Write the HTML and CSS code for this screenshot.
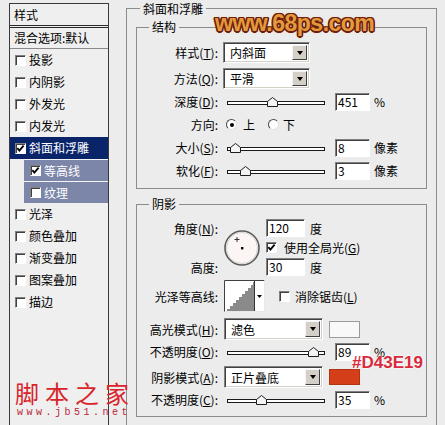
FILE: index.html
```html
<!DOCTYPE html>
<html lang="zh-CN">
<head>
<meta charset="utf-8">
<title>图层样式 - 斜面和浮雕</title>
<link rel="stylesheet" href="styles.css">
</head>
<body>
<div class="dialog">
  <div class="sidebar">
    <div class="side-head">样式</div>
    <div class="side-blend">混合选项:默认</div>
    <div class="side-item"><span class="cb"></span>投影</div>
    <div class="side-item"><span class="cb"></span>内阴影</div>
    <div class="side-item"><span class="cb"></span>外发光</div>
    <div class="side-item"><span class="cb"></span>内发光</div>
    <div class="side-item selected"><span class="cb"><svg viewBox="0 0 9 9" width="9" height="9"><path d="M1.3 4.2 L3.4 6.6 L7.6 1.6" fill="none" stroke="#000" stroke-width="1.8"/></svg></span>斜面和浮雕</div>
    <div class="side-item sub"><span class="cb"><svg viewBox="0 0 9 9" width="9" height="9"><path d="M1.3 4.2 L3.4 6.6 L7.6 1.6" fill="none" stroke="#000" stroke-width="1.8"/></svg></span>等高线</div>
    <div class="side-item sub"><span class="cb"></span>纹理</div>
    <div class="side-item"><span class="cb"></span>光泽</div>
    <div class="side-item"><span class="cb"></span>颜色叠加</div>
    <div class="side-item"><span class="cb"></span>渐变叠加</div>
    <div class="side-item"><span class="cb"></span>图案叠加</div>
    <div class="side-item"><span class="cb"></span>描边</div>
  </div>

  <div class="main">
    <fieldset class="group outer">
      <legend>斜面和浮雕</legend>

      <fieldset class="group inner structure">
        <legend>结构</legend>
        <div class="row row-sel">
          <span class="lbl">样式(<u>T</u>):</span>
          <div class="select s-struct"><span class="select-text">内斜面</span><span class="select-btn"><span class="arrow"></span></span></div>
        </div>
        <div class="row row-sel">
          <span class="lbl">方法(<u>Q</u>):</span>
          <div class="select s-struct"><span class="select-text">平滑</span><span class="select-btn"><span class="arrow"></span></span></div>
        </div>
        <div class="row row-sl first-sl">
          <span class="lbl">深度(<u>D</u>):</span>
          <div class="slider"><svg class="thumb" style="left:46%" viewBox="0 0 11 10" width="11" height="10"><polygon points="0.5,9.5 0.5,4.5 5.5,0.5 10.5,4.5 10.5,9.5" fill="#f4f4f4" stroke="#1e1e1e"/></svg></div>
          <span class="num">451</span><span class="unit">%</span>
        </div>
        <div class="row row-sl">
          <span class="lbl">方向:</span>
          <span class="radio r-up"><span class="dot"></span></span><span class="r-text">上</span>
          <span class="radio r-down"></span><span class="r-text r-text2">下</span>
        </div>
        <div class="row row-sl">
          <span class="lbl">大小(<u>S</u>):</span>
          <div class="slider"><svg class="thumb" style="left:8%" viewBox="0 0 11 10" width="11" height="10"><polygon points="0.5,9.5 0.5,4.5 5.5,0.5 10.5,4.5 10.5,9.5" fill="#f4f4f4" stroke="#1e1e1e"/></svg></div>
          <span class="num">8</span><span class="unit">像素</span>
        </div>
        <div class="row row-sl">
          <span class="lbl">软化(<u>F</u>):</span>
          <div class="slider"><svg class="thumb" style="left:18%" viewBox="0 0 11 10" width="11" height="10"><polygon points="0.5,9.5 0.5,4.5 5.5,0.5 10.5,4.5 10.5,9.5" fill="#f4f4f4" stroke="#1e1e1e"/></svg></div>
          <span class="num">3</span><span class="unit">像素</span>
        </div>
      </fieldset>

      <fieldset class="group inner shadow">
        <legend>阴影</legend>
        <div class="angle">
          <span class="lbl a-l1">角度(<u>N</u>):</span>
          <svg class="dial" viewBox="0 0 38 38" width="38" height="38">
            <circle cx="19" cy="19" r="17" fill="#fbf6f3" stroke="#5c5c5c" stroke-width="1.6"/>
            <circle cx="19" cy="19" r="15.6" fill="none" stroke="#c9c9c9" stroke-width="0.8"/>
            <rect x="18" y="18" width="2.4" height="2.4" fill="#000"/>
            <path d="M14 8 V13 M11.5 10.5 H16.5" stroke="#333" stroke-width="1"/>
          </svg>
          <span class="a-c1"><span class="num n-angle">120</span><span class="unit u-deg">度</span></span>
          <span class="a-c2"><span class="cb"><svg viewBox="0 0 9 9" width="9" height="9"><path d="M1.3 4.2 L3.4 6.6 L7.6 1.6" fill="none" stroke="#000" stroke-width="1.8"/></svg></span><span class="cb-text">使用全局光(<u>G</u>)</span></span>
          <span class="lbl a-l3">高度:</span>
          <span class="a-c3"><span class="num n-angle">30</span><span class="unit u-deg">度</span></span>
        </div>

        <div class="row row-contour">
          <span class="lbl">光泽等高线:</span>
          <svg class="contour" viewBox="0 0 41 32" width="41" height="32">
            <rect x="0" y="0" width="41" height="32" fill="#fff"/>
            <polygon points="3,31 3,29 6,29 6,26 9,26 9,23 12,23 12,20 15,20 15,17 18,17 18,14 21,14 21,11 24,11 24,8 27,8 27,5 29,5 29,2 30,2 30,31" fill="#8a8a8a"/>
            <path d="M30.5 1 V31" stroke="#333" stroke-width="1"/>
            <polygon points="33,15 38,15 35.5,18" fill="#000"/>
            <path d="M0.5 32 V0.5 H40.5" fill="none" stroke="#404040" stroke-width="1"/>
            <path d="M40.5 0.5 V31.5 H0.5" fill="none" stroke="#e8e8e8" stroke-width="1"/>
          </svg>
          <span class="cb cb-aa"></span><span class="cb-text">消除锯齿(<u>L</u>)</span>
        </div>

        <div class="row row-mode first-mode">
          <span class="lbl">高光模式(<u>H</u>):</span>
          <div class="select s-mode"><span class="select-text">滤色</span><span class="select-btn"><span class="arrow"></span></span></div>
          <span class="swatch sw-white"></span>
        </div>
        <div class="row row-sl">
          <span class="lbl">不透明度(<u>O</u>):</span>
          <div class="slider"><svg class="thumb" style="left:89%" viewBox="0 0 11 10" width="11" height="10"><polygon points="0.5,9.5 0.5,4.5 5.5,0.5 10.5,4.5 10.5,9.5" fill="#f4f4f4" stroke="#1e1e1e"/></svg></div>
          <span class="num">89</span><span class="unit">%</span>
        </div>
        <div class="row row-mode second-mode">
          <span class="lbl">阴影模式(<u>A</u>):</span>
          <div class="select s-mode"><span class="select-text">正片叠底</span><span class="select-btn"><span class="arrow"></span></span></div>
          <span class="swatch sw-red"></span>
        </div>
        <div class="row row-sl">
          <span class="lbl">不透明度(<u>C</u>):</span>
          <div class="slider"><svg class="thumb" style="left:35%" viewBox="0 0 11 10" width="11" height="10"><polygon points="0.5,9.5 0.5,4.5 5.5,0.5 10.5,4.5 10.5,9.5" fill="#f4f4f4" stroke="#1e1e1e"/></svg></div>
          <span class="num">35</span><span class="unit">%</span>
        </div>
      </fieldset>
    </fieldset>
  </div>

  <div class="wm-68ps">www.68ps.com</div>
  <div class="hex-note">#D43E19</div>
  <div class="wm-jb51">
    <div class="wm-cn">脚本之家</div>
    <div class="wm-url">www.jb51.net</div>
  </div>
</div>
</body>
</html>
```

FILE: styles.css
```css
* { box-sizing: border-box; }

body {
  margin: 0;
  background: #ececec;
  font-family: "Noto Sans CJK SC", "Noto Sans", sans-serif;
  font-size: 12px;
  color: #000;
}

.dialog {
  position: relative;
  width: 445px;
  height: 425px;
  overflow: hidden;
  display: flex;
  align-items: flex-start;
  background: #ececec;
}

u { text-decoration: underline; text-underline-offset: 1px; }

/* ---------- sidebar ---------- */
.sidebar {
  margin: 3px 0 0 9px;
  width: 100px;
  height: 422px;
  border: 1px solid #3a3a3a;
  border-bottom: none;
  background: #efefef;
  display: flex;
  flex-direction: column;
  flex: none;
}

.side-head {
  height: 24px;
  padding-left: 4px;
  display: flex;
  align-items: center;
  border-bottom: 3px double #2a2a2a;
  line-height: 14px;
}

.side-blend {
  height: 21px;
  padding-left: 4px;
  display: flex;
  align-items: center;
  border-bottom: 1px solid #8a8a8a;
  line-height: 14px;
  white-space: nowrap;
}

.side-item {
  height: 22px;
  display: flex;
  align-items: center;
  padding-left: 5px;
  line-height: 14px;
  white-space: nowrap;
}

.side-item .cb { margin-right: 3px; }

.side-item.selected {
  background: #0a246a;
  color: #fff;
}

.side-item.sub {
  margin-left: 14px;
  padding-left: 6px;
  background: #7b86a8;
  color: #fff;
  border-top: 1px solid #f4f4f4;
}

/* ---------- generic controls ---------- */
.cb {
  width: 11px;
  height: 11px;
  flex: none;
  background: #fff;
  border: 1px solid;
  border-color: #808080 #fff #fff #808080;
  box-shadow: inset 1px 1px 0 #404040;
  display: flex;
  align-items: center;
  justify-content: center;
}
.cb svg { display: block; }

.num {
  flex: none;
  width: 35px;
  height: 18px;
  margin-left: 10px;
  background: #fff;
  border: 1px solid;
  border-color: #808080 #fff #fff #808080;
  box-shadow: inset 1px 1px 0 #404040;
  padding-left: 2px;
  line-height: 16px;
}

.unit { margin-left: 4px; }

.select {
  flex: none;
  display: flex;
  background: #fff;
  border: 1px solid;
  border-color: #808080 #fff #fff #808080;
  box-shadow: inset 1px 1px 0 #404040, inset -1px -1px 0 #d4d0c8;
}
.select-text {
  flex: 1;
  padding-left: 6px;
  display: flex;
  align-items: center;
}
.select-btn {
  width: 15px;
  margin: 2px 2px 2px 0;
  background: #d4d0c8;
  border: 1px solid;
  border-color: #f4f4f4 #404040 #404040 #f4f4f4;
  display: flex;
  align-items: center;
  justify-content: center;
}
.arrow {
  width: 0;
  height: 0;
  border-left: 3.5px solid transparent;
  border-right: 3.5px solid transparent;
  border-top: 4px solid #000;
}

.slider {
  flex: none;
  position: relative;
  width: 98px;
  height: 4px;
  margin: 3px 0 0 9px;
  border: 1px solid #1a1a1a;
  background: #fff;
}
.thumb {
  position: absolute;
  bottom: -3px;
  margin-left: -5.5px;
  display: block;
}

.radio {
  flex: none;
  width: 11px;
  height: 11px;
  border-radius: 50%;
  border: 1px solid;
  border-color: #4a4a4a #e2e2e2 #e2e2e2 #4a4a4a;
  background: #fff;
  display: flex;
  align-items: center;
  justify-content: center;
}
.dot { width: 4px; height: 4px; border-radius: 50%; background: #000; }
.r-up { margin-left: 8px; }
.r-text { margin-left: 6px; }
.r-down { margin-left: 13px; }
.r-text2 { margin-left: 4px; }

.swatch {
  flex: none;
  width: 31px;
  margin-left: 6px;
  border: 1px solid #9a9a9a;
}
.sw-white { height: 17px; background: #f8f8f8; }
.sw-red { height: 16px; background: #d43e19; border-color: #b03414; }

/* ---------- group boxes ---------- */
.main {
  margin-left: 17px;
  width: 311px;
  flex: none;
}

.group {
  margin: 0;
  min-width: 0;
  border: 1px solid #8c8c8c;
}
.group > legend {
  padding: 0 3px;
  height: 14px;
  line-height: 14px;
}

.outer { padding: 4px 9px 14px; }
.outer > legend { margin-left: 4px; height: 16px; line-height: 17px; }

.inner { width: 291px; padding-left: 0; padding-right: 0; }
.inner > legend { margin-left: 12px; }

.structure { padding-top: 8px; padding-bottom: 6px; }
.shadow { margin-top: 8px; padding-top: 8px; padding-bottom: 5px; }

.row {
  display: flex;
  align-items: center;
  white-space: nowrap;
}
.lbl {
  flex: none;
  width: 81px;
  text-align: right;
  white-space: nowrap;
}

.row-sel { height: 21px; }
.row-sel + .row-sel { margin-top: 5px; }
.s-struct { width: 87px; height: 21px; margin-left: 5px; }

.row-sl { height: 23px; }
.first-sl { margin-top: 1px; }

/* angle block */
.angle {
  display: grid;
  grid-template-columns: 81px 38px auto;
  grid-template-rows: 18px 21px 18px;
  column-gap: 5px;
  align-items: center;
}
.a-l1 { grid-column: 1; grid-row: 1; }
.a-l3 { grid-column: 1; grid-row: 3; }
.dial { grid-column: 2; grid-row: 1 / span 3; display: block; }
.a-c1, .a-c2, .a-c3 { grid-column: 3; display: flex; align-items: center; white-space: nowrap; }
.a-c1 { grid-row: 1; }
.a-c2 { grid-row: 2; }
.a-c3 { grid-row: 3; }
.n-angle { width: 39px; margin-left: 0; }
.u-deg { margin-left: 5px; }
.cb-text { margin-left: 7px; }

.row-contour { height: 32px; margin-top: 4px; }
.contour { flex: none; display: block; margin-left: 6px; }
.cb-aa { margin-left: 14px; }
.row-contour .cb-text { margin-left: 5px; }

.row-mode { height: 22px; }
.first-mode { margin-top: 6px; }
.second-mode { margin-top: 3px; }
.s-mode { width: 99px; height: 22px; margin-left: 6px; }

/* ---------- overlay watermarks ---------- */
.wm-68ps {
  position: absolute;
  left: 215px;
  top: 10px;
  font-family: "Liberation Sans", Arial, sans-serif;
  font-weight: bold;
  font-size: 23px;
  line-height: 26px;
  letter-spacing: -0.5px;
  color: #e39a3e;
  text-shadow:
    1.5px 0 0 #6e1f0a, -1.5px 0 0 #6e1f0a, 0 1.5px 0 #6e1f0a, 0 -1.5px 0 #6e1f0a,
    1.2px 1.2px 0 #6e1f0a, -1.2px 1.2px 0 #6e1f0a, 1.2px -1.2px 0 #6e1f0a, -1.2px -1.2px 0 #6e1f0a,
    0 0 4px #f2d2b0;
}

.hex-note {
  position: absolute;
  left: 352px;
  top: 353px;
  font-family: "Liberation Sans", Arial, sans-serif;
  font-weight: bold;
  font-size: 17px;
  line-height: 20px;
  color: #d82a3c;
  text-shadow: 0 0 2px #fff, 0 0 2px #fff;
}

.wm-jb51 {
  position: absolute;
  left: 15px;
  top: 379px;
}
.wm-cn {
  font-family: "Noto Sans CJK SC", sans-serif;
  font-size: 24px;
  line-height: 27px;
  letter-spacing: 6px;
  color: #d8242a;
  white-space: nowrap;
}
.wm-url {
  margin-top: 2px;
  margin-left: 2px;
  font-family: "Liberation Mono", monospace;
  font-size: 10px;
  line-height: 10px;
  letter-spacing: 3.5px;
  color: #b8283a;
  white-space: nowrap;
}
```
